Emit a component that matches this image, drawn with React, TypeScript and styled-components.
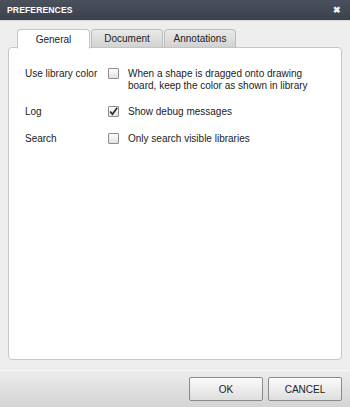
import React from "react";
import styled, { createGlobalStyle } from "styled-components";

const Global = createGlobalStyle`
  html, body { margin: 0; padding: 0; background: #eeeeee; }
  body { font-family: "Liberation Sans", Arial, sans-serif; font-size: 10px; color: #222; }
`;

const Dialog = styled.div`
  width: 350px;
  height: 407px;
  display: flex;
  flex-direction: column;
  background: #eeeeee;
  overflow: hidden;
`;

const TitleBar = styled.div`
  height: 20px;
  flex: none;
  display: flex;
  align-items: center;
  justify-content: space-between;
  padding: 0 9px 0 7px;
  background: linear-gradient(#4a515c, #3b424d);
  color: #ffffff;
  font-weight: bold;
  font-size: 8.6px;
  letter-spacing: 0.1px;
  border-bottom: 1px solid #d8d8d8;
`;

const Close = styled.span`
  font-size: 9px;
  font-weight: bold;
  line-height: 1;
  color: #f4f4f4;
`;

const Body = styled.div`
  flex: 1;
  display: flex;
  flex-direction: column;
  padding: 8px 8px 10px 8px;
`;

const TabRow = styled.div`
  display: flex;
  gap: 1px;
  padding-left: 9px;
  height: 19px;
  position: relative;
  z-index: 1;
`;

const Tab = styled.div<{ $active?: boolean; $w: number }>`
  width: ${(p) => p.$w}px;
  box-sizing: border-box;
  display: flex;
  align-items: center;
  justify-content: center;
  font-size: 10px;
  color: #222;
  border: 1px solid ${(p) => (p.$active ? "#c4c4c4" : "#bdbdbd")};
  border-bottom: ${(p) => (p.$active ? "1px solid #ffffff" : "1px solid #c4c4c4")};
  border-radius: 4px 4px 0 0;
  background: ${(p) => (p.$active ? "#ffffff" : "linear-gradient(#e9e9e9, #d2d2d2)")};
  height: ${(p) => (p.$active ? "20px" : "19px")};
`;

const Panel = styled.div`
  flex: 1;
  margin-top: -1px;
  background: #ffffff;
  border: 1px solid #c6c6c6;
  border-radius: 4px;
  padding: 19px 16px;
  display: flex;
  flex-direction: column;
  gap: 14px;
`;

const Row = styled.div`
  display: grid;
  grid-template-columns: 83px 20px 1fr;
  align-items: start;
  line-height: 11.5px;
`;

const Label = styled.div`
  color: #222;
  padding-top: 1px;
`;

const Box = styled.div`
  width: 11px;
  height: 11px;
  box-sizing: border-box;
  border: 1px solid #8e8e8e;
  border-radius: 1px;
  background: linear-gradient(#fdfdfd, #e2e2e2);
  margin-top: 1px;
  display: flex;
  align-items: center;
  justify-content: center;
`;

const Text = styled.div`
  color: #222;
  padding-top: 1px;
`;

const Footer = styled.div`
  height: 37px;
  flex: none;
  border-top: 1px solid #f7f7f7;
  background: linear-gradient(#ececec, #d4d4d4);
  display: flex;
  justify-content: flex-end;
  align-items: flex-start;
  gap: 5px;
  padding: 6px 8px 0 0;
  box-sizing: border-box;
`;

const Button = styled.button<{ $w: number }>`
  width: ${(p) => p.$w}px;
  height: 24px;
  border: 1px solid #8a8a8a;
  border-radius: 2px;
  background: linear-gradient(#fbfbfb, #dedede);
  font-family: "Liberation Sans", Arial, sans-serif;
  font-size: 10px;
  color: #222;
  padding: 0;
`;

const Check = () => (
  <svg width="9" height="9" viewBox="0 0 9 9">
    <path d="M1.2 4.6 L3.4 7.2 L8.2 0.8" fill="none" stroke="#222" strokeWidth="1.6" />
  </svg>
);

export default function App() {
  return (
    <Dialog>
      <Global />
      <TitleBar>
        <span>PREFERENCES</span>
        <Close>✖</Close>
      </TitleBar>
      <Body>
        <TabRow>
          <Tab $active $w={73}>General</Tab>
          <Tab $w={72}>Document</Tab>
          <Tab $w={72}>Annotations</Tab>
        </TabRow>
        <Panel>
          <Row>
            <Label>Use library color</Label>
            <Box />
            <Text>
              When a shape is dragged onto drawing
              <br />
              board, keep the color as shown in library
            </Text>
          </Row>
          <Row>
            <Label>Log</Label>
            <Box>
              <Check />
            </Box>
            <Text>Show debug messages</Text>
          </Row>
          <Row>
            <Label>Search</Label>
            <Box />
            <Text>Only search visible libraries</Text>
          </Row>
        </Panel>
      </Body>
      <Footer>
        <Button $w={74}>OK</Button>
        <Button $w={74}>CANCEL</Button>
      </Footer>
    </Dialog>
  );
}
